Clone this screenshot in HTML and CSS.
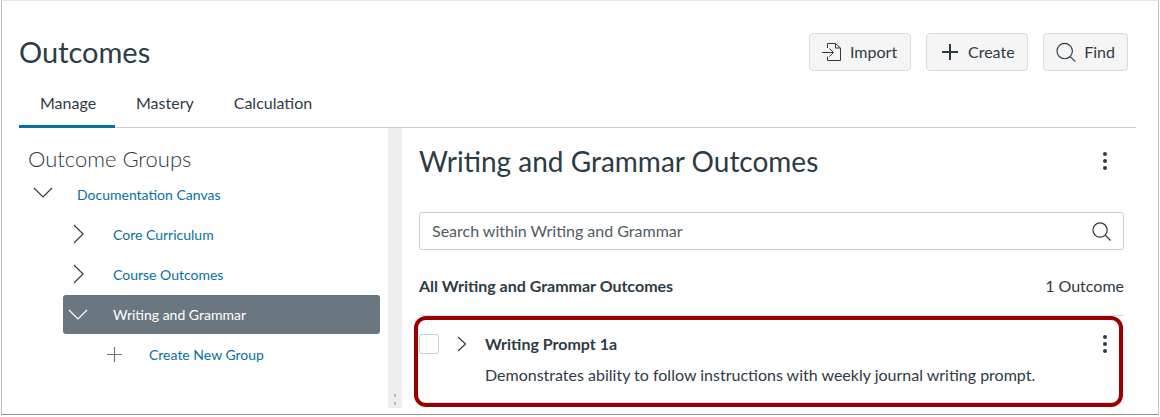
FILE: index.html
```html
<!DOCTYPE html>
<html lang="en">
<head>
<meta charset="utf-8">
<title>Outcomes</title>
<link rel="stylesheet" href="styles.css">
</head>
<body>
<div class="frame">
  <header class="head">
    <h1 class="title">Outcomes</h1>
    <div class="actions">
      <button class="btn btn-import">
        <svg class="btn-icon" viewBox="0 0 20 20" width="20" height="20" fill="none" stroke="#2d3b45" stroke-width="1"><path d="M5.5 6V1.5h8l5 4.500V18.500h-13V14.500"/><path d="M13.500 1.500v4.500h5"/><path d="M0 10.500h11M7.500 6.500l4 4-4 4"/></svg>
        <span>Import</span>
      </button>
      <button class="btn btn-create">
        <svg class="btn-icon" viewBox="0 0 18 18" width="18" height="18" fill="none" stroke="#2d3b45" stroke-width="2"><path d="M9 1v16M1 9h16"/></svg>
        <span>Create</span>
      </button>
      <button class="btn btn-find">
        <svg class="btn-icon" viewBox="0 0 21 21" width="21" height="21" fill="none" stroke="#2d3b45" stroke-width="1.200"><circle cx="9" cy="9" r="8"/><path d="M14.800 14.800l5.200 5.200"/></svg>
        <span>Find</span>
      </button>
    </div>
  </header>
  <nav class="tabs">
    <a class="tab tab-active">Manage</a>
    <a class="tab">Mastery</a>
    <a class="tab">Calculation</a>
  </nav>
  <div class="panes">
    <aside class="side">
      <h2 class="side-title">Outcome Groups</h2>
      <ul class="tree">
        <li class="node lvl0">
          <svg class="chev chev-down" viewBox="0 0 20 11" width="20" height="11"><path d="M1 1l9 9 9-9"/></svg>
          <a>Documentation Canvas</a>
        </li>
        <li class="node lvl1">
          <svg class="chev chev-right" viewBox="0 0 11 20" width="11" height="20"><path d="M1 1l9 9-9 9"/></svg>
          <a>Core Curriculum</a>
        </li>
        <li class="node lvl1">
          <svg class="chev chev-right" viewBox="0 0 11 20" width="11" height="20"><path d="M1 1l9 9-9 9"/></svg>
          <a>Course Outcomes</a>
        </li>
        <li class="node lvl1 node-selected">
          <svg class="chev chev-down chev-white" viewBox="0 0 20 11" width="20" height="11"><path d="M1 1l9 9 9-9"/></svg>
          <a>Writing and Grammar</a>
        </li>
        <li class="node lvl2">
          <svg class="plus" viewBox="0 0 15 15" width="15" height="15"><path d="M7.500 0v15M0 7.500h15"/></svg>
          <a>Create New Group</a>
        </li>
      </ul>
    </aside>
    <div class="splitter"><span class="grip"></span><span class="grip"></span></div>
    <main class="main">
      <div class="main-head">
        <h2 class="main-title">Writing and Grammar Outcomes</h2>
        <svg class="kebab" viewBox="0 0 6 20" width="6" height="20"><circle cx="3" cy="3" r="2"/><circle cx="3" cy="10" r="2"/><circle cx="3" cy="17" r="2"/></svg>
      </div>
      <div class="search">
        <span>Search within Writing and Grammar</span>
        <svg viewBox="0 0 20 20" width="19" height="19" fill="none" stroke="#2d3b45" stroke-width="1.300"><circle cx="8.500" cy="8.500" r="7.500"/><path d="M14 14l5.500 5.500"/></svg>
      </div>
      <div class="summary">
        <strong>All Writing and Grammar Outcomes</strong>
        <span>1 Outcome</span>
      </div>
      <div class="outcome">
        <div class="outcome-top">
          <span class="check"></span>
          <svg class="chev chev-small" viewBox="0 0 10 16" width="10" height="16"><path d="M1 1l7.500 7L1 15"/></svg>
          <strong class="outcome-name">Writing Prompt 1a</strong>
          <svg class="kebab kebab-row" viewBox="0 0 6 20" width="6" height="20"><circle cx="3" cy="3" r="2"/><circle cx="3" cy="10" r="2"/><circle cx="3" cy="17" r="2"/></svg>
        </div>
        <p class="outcome-desc">Demonstrates ability to follow instructions with weekly journal writing prompt.</p>
        <div class="callout"></div>
      </div>
    </main>
  </div>
</div>
</body>
</html>
```
FILE: styles.css
```css
* { box-sizing: border-box; }
html, body { margin: 0; padding: 0; background: #fff; }
body {
  width: 1160px;
  height: 417px;
  overflow: hidden;
  font-family: Lato, "Open Sans", sans-serif;
  color: #2d3b45;
}
.frame {
  width: 1158px;
  height: 415px;
  margin-left: 1px;
  border: 1px solid #d4d4d4;
  border-left: 1px solid #bdbdbd;
  border-right: 1px solid #c4c4c4;
  border-top-color: #e6e6e6;
  border-bottom: 1px solid #8f8f8f;
  padding: 0 22px 0 17px;
  display: flex;
  flex-direction: column;
}
.head {
  display: flex;
  justify-content: space-between;
  align-items: flex-start;
  height: 84px;
}
.title {
  margin: 32px 0 0 0;
  font-size: 29px;
  line-height: 38px;
  font-weight: 400;
}
.actions {
  display: flex;
  gap: 15px;
  margin-top: 32px;
  margin-right: 8px;
}
.btn {
  display: flex;
  align-items: center;
  height: 38px;
  padding: 0 12px;
  background: #f5f5f5;
  border: 1px solid #d8dcdf;
  border-radius: 4px;
  font: 400 16px Lato, sans-serif;
  color: #2d3b45;
}
.btn span { margin-top: -2px; }
.btn-import { width: 102px; gap: 8px; }
.btn-create { width: 102px; gap: 9px; padding-left: 14px; }
.btn-find { width: 85px; gap: 8px; padding-left: 12px; }
.tabs {
  display: flex;
  height: 43px;
  border-bottom: 1px solid #c7cdd1;
}
.tab {
  display: block;
  height: 43px;
  padding: 7px 19px 0 21px;
  font-size: 16px;
  line-height: 21px;
}
.tab-active {
  width: 96px;
  border-bottom: 3px solid #0770a3;
}
.panes {
  display: flex;
  height: 280px;
}
.side {
  width: 369px;
  flex: none;
}
.side-title {
  margin: 18px 0 0 9px;
  font-size: 22px;
  line-height: 26px;
  font-weight: 300;
  color: #2d3b45;
}
.tree {
  list-style: none;
  margin: 3px 8px 0 0;
  padding: 0;
}
.node {
  display: flex;
  align-items: center;
  height: 40px;
  font-size: 14px;
  color: #0770a3;
}
.node a { display: block; }
.lvl0 { padding-left: 14px; gap: 24px; margin-top: -1px; }
.lvl0 .chev-down { margin-top: -3px; }
.lvl1 { padding-left: 54px; gap: 29px; }
.lvl2 { padding-left: 88px; gap: 27px; }
.node-selected {
  height: 39px;
  margin-top: 1px;
  margin-left: 44px;
  padding-left: 5px;
  gap: 25px;
  background: #6b7780;
  border-radius: 3px;
  color: #fff;
}
.chev { fill: none; stroke: #2d3b45; stroke-width: 1.200; flex: none; }
.chev-white { stroke: #fff; }
.plus { fill: none; stroke: #6b7780; stroke-width: 1.200; flex: none; }
.splitter {
  width: 14px;
  flex: none;
  background: #eeeeee;
  display: flex;
  flex-direction: column;
  justify-content: flex-end;
  align-items: center;
  gap: 5px;
  padding-bottom: 3px;
}
.grip {
  width: 2px;
  height: 3px;
  background: #b4bac0;
}
.main {
  flex: 1;
  padding: 0 12px 0 17px;
  min-width: 0;
}
.main-head {
  display: flex;
  justify-content: space-between;
  align-items: center;
  height: 37px;
  margin-top: 15px;
  padding-right: 16px;
}
.main-head .kebab { margin-top: -2px; }
.main-title {
  margin: 0;
  font-size: 28px;
  line-height: 37px;
  font-weight: 400;
}
.kebab { fill: #2d3b45; flex: none; }
.search {
  display: flex;
  justify-content: space-between;
  align-items: center;
  height: 38px;
  margin-top: 32px;
  padding: 0 12px;
  border: 1px solid #c7cdd1;
  border-radius: 3px;
  font-size: 16px;
  color: #4f5b63;
  background: #fff;
}
.search span { margin-top: -2px; }
.summary {
  display: flex;
  justify-content: space-between;
  align-items: center;
  margin-top: 24px;
  height: 22px;
  font-size: 16px;
}
.summary strong { font-weight: 700; }
.outcome {
  position: relative;
  margin-top: 19px;
  height: 88px;
  border-top: 1px solid #d8dcdf;
  border-bottom: 1px solid #d8dcdf;
}
.outcome-top {
  display: flex;
  align-items: center;
  height: 20px;
  margin-top: 18px;
}
.check {
  width: 20px;
  height: 20px;
  flex: none;
  background: #fff;
  border: 1px solid #c7cdd1;
  border-radius: 3px;
}
.chev-small { margin-left: 18px; }
.outcome-name {
  margin-left: 18px;
  margin-top: -2px;
  font-size: 16px;
  font-weight: 700;
}
.kebab-row { margin-left: auto; margin-right: 16px; }
.outcome-desc {
  margin: 10px 0 0 66px;
  font-size: 16px;
  line-height: 21px;
}
.callout {
  position: absolute;
  left: -5px;
  right: 1px;
  top: 0;
  height: 91px;
  border: 4px solid #9b0000;
  border-radius: 12px;
  pointer-events: none;
}
```
